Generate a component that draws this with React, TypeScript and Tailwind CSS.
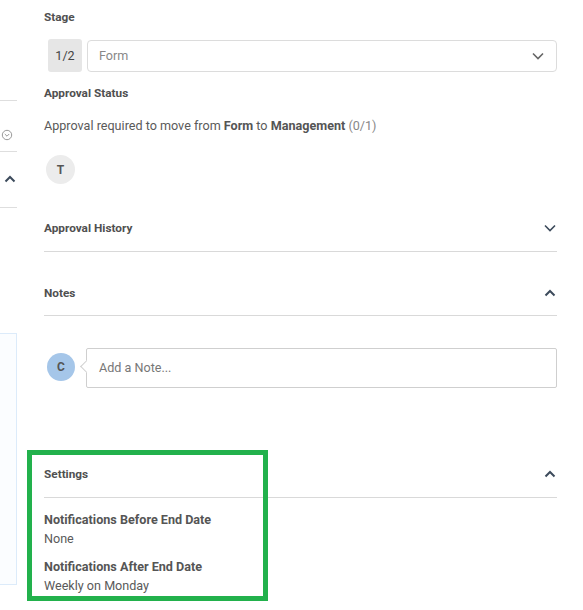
import React from "react";

const font = { fontFamily: "Roboto, 'Liberation Sans', sans-serif" };

function ChevronDown({ className = "" }: { className?: string }) {
  return (
    <svg width="12" height="8" viewBox="0 0 12 8" className={className}>
      <polyline points="1,1.5 6,6.5 11,1.5" fill="none" stroke="currentColor" strokeWidth="1.6" />
    </svg>
  );
}

function ChevronUp({ className = "" }: { className?: string }) {
  return (
    <svg width="12" height="8" viewBox="0 0 12 8" className={className}>
      <polyline points="1.5,6.5 6,2 10.5,6.5" fill="none" stroke="currentColor" strokeWidth="2" />
    </svg>
  );
}

export default function App() {
  return (
    <div className="relative w-[583px] h-[610px] overflow-hidden bg-white text-[#555]" style={font}>
      <div className="flex">
        {/* left sliver column */}
        <div className="w-[17px] shrink-0 flex flex-col">
          <div className="h-[100px]" />
          <div className="h-[51px] border-t border-[#dedede] flex items-start pt-[28px]">
            <svg width="12" height="12" viewBox="0 0 12 12" className="ml-[1px] text-[#999]">
              <circle cx="6" cy="6" r="4.7" fill="none" stroke="currentColor" strokeWidth="1" />
              <polyline points="3.8,5 6,7.2 8.2,5" fill="none" stroke="currentColor" strokeWidth="1" />
            </svg>
          </div>
          <div className="h-[56px] border-t border-[#dedede] flex items-center">
            <ChevronUp className="ml-[4px] mt-[-2px] text-[#3d4b5c]" />
          </div>
          <div className="border-t border-[#dedede] h-[126px]" />
          <div className="h-[252px] border border-l-0 border-[#dcebfa] bg-[#fbfdff]" />
        </div>

        {/* main column */}
        <div className="ml-[27px] w-[513px] flex flex-col text-[12.6px] leading-[20px]">
          <div className="mt-[7px] font-bold text-[11.8px] text-[#505050]">Stage</div>

          <div className="mt-[12px] flex items-start pl-[4px]">
            <div className="w-[34px] h-[33px] rounded-[3px] bg-[#e6e6e6] flex items-center justify-center text-[#444] text-[12.6px]">
              1/2
            </div>
            <div className="ml-[5px] flex-1 h-[32px] mt-[1px] border border-[#dcdcdc] rounded-[4px] flex items-center justify-between pl-[11px] pr-[12px]">
              <span className="text-[#888]">Form</span>
              <ChevronDown className="text-[#666]" />
            </div>
          </div>

          <div className="mt-[11px] font-bold text-[11.8px] text-[#505050]">Approval Status</div>

          <div className="mt-[13px] text-[#5a5a5a]">
            Approval required to move from <b className="text-[#555]">Form</b> to{" "}
            <b className="text-[#555]">Management</b> <span className="text-[#888]">(0/1)</span>
          </div>

          <div className="mt-[19px] ml-[2px] w-[29px] h-[29px] rounded-full bg-[#ececec] flex items-center justify-center font-bold text-[12px] text-[#555]">
            T
          </div>

          <div className="mt-[34px] pb-[13px] border-b border-[#d9d9d9] flex items-center justify-between">
            <span className="font-bold text-[11.8px] text-[#505050]">Approval History</span>
            <ChevronDown className="mr-[1px] text-[#3d4b5c]" />
          </div>

          <div className="mt-[31px] pb-[12px] border-b border-[#d9d9d9] flex items-center justify-between">
            <span className="font-bold text-[11.8px] text-[#505050]">Notes</span>
            <ChevronUp className="mr-[1px] text-[#3d4b5c]" />
          </div>

          <div className="mt-[32px] flex items-center">
            <div className="ml-[3px] w-[28px] h-[28px] rounded-full bg-[#a5c6e9] flex items-center justify-center font-bold text-[12px] text-[#555] mt-[-2px]">
              C
            </div>
            <div className="relative ml-[11px] flex-1 h-[40px] border border-[#cfcfcf] rounded-[2px] flex items-center pl-[12px]">
              <div className="absolute left-[-5px] top-[13px] w-[9px] h-[9px] bg-white border-l border-b border-[#cfcfcf] rotate-45" />
              <span className="text-[#777]">Add a Note...</span>
            </div>
          </div>

          <div className="mt-[76px] pb-[13px] border-b border-[#d9d9d9] flex items-center justify-between">
            <span className="font-bold text-[11.8px] text-[#505050]">Settings</span>
            <ChevronUp className="mr-[1px] text-[#3d4b5c]" />
          </div>

          <div className="mt-[12px] font-bold text-[#555] leading-[19px]">Notifications Before End Date</div>
          <div className="leading-[19px] text-[#5a5a5a]">None</div>
          <div className="mt-[9px] font-bold text-[#555] leading-[19px]">Notifications After End Date</div>
          <div className="leading-[19px] text-[#5a5a5a]">Weekly on Monday</div>
        </div>
      </div>

      {/* green annotation box */}
      <div className="absolute left-[27px] top-[450px] w-[241px] h-[151px] border-[5px] border-[#22b14c]" />
    </div>
  );
}
